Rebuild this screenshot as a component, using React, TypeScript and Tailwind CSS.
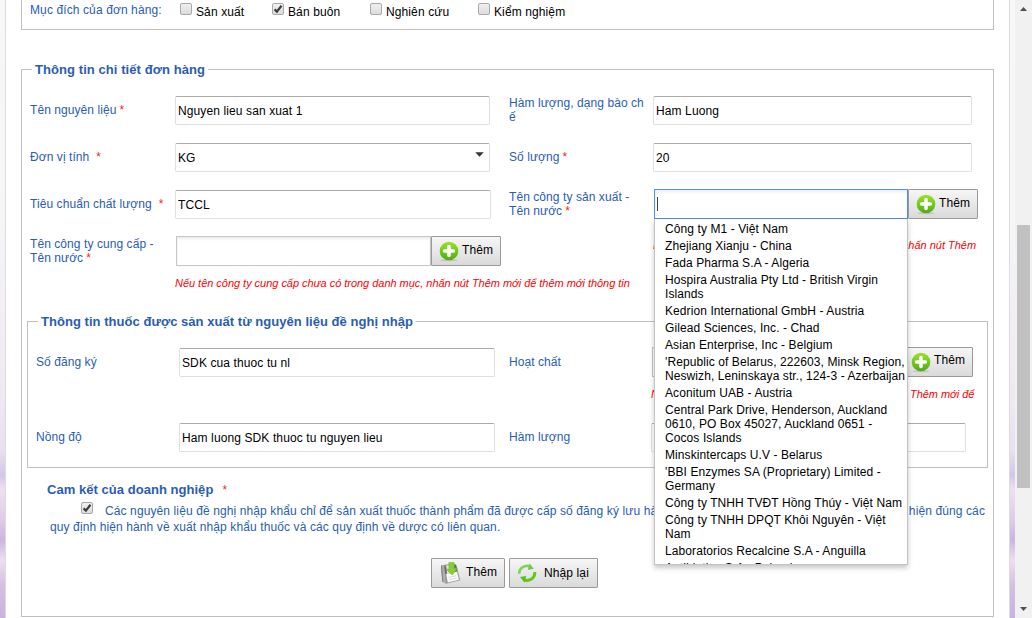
import type { ReactNode } from 'react';

const companies: string[][] = [
  ['Công ty M1 - Việt Nam'],
  ['Zhejiang Xianju - China'],
  ['Fada Pharma S.A - Algeria'],
  ['Hospira Australia Pty Ltd - British Virgin', 'Islands'],
  ['Kedrion International GmbH - Austria'],
  ['Gilead Sciences, Inc. - Chad'],
  ['Asian Enterprise, Inc - Belgium'],
  ["'Republic of Belarus, 222603, Minsk Region,", 'Neswizh, Leninskaya str., 124-3 - Azerbaijan'],
  ['Aconitum UAB - Austria'],
  ['Central Park Drive, Henderson, Auckland', '0610, PO Box 45027, Auckland 0651 -', 'Cocos Islands'],
  ['Minskintercaps U.V - Belarus'],
  ["'BBI Enzymes SA (Proprietary) Limited -", 'Germany'],
  ['Công ty TNHH TVĐT Hồng Thúy - Việt Nam'],
  ['Công ty TNHH DPQT Khôi Nguyên - Việt', 'Nam'],
  ['Laboratorios Recalcine S.A - Anguilla'],
  ['Antibiotice S.A - Poland'],
];

function Star({ className = 'ml-[3px]' }: { className?: string }) {
  return <span className={`text-[#ff2020] ${className}`}>*</span>;
}

function Label({ children, className = 'w-[145px]' }: { children: ReactNode; className?: string }) {
  return <div className={`-mt-[2px] shrink-0 whitespace-nowrap leading-[14px] tracking-[0.07px] text-[#2a5db0] ${className}`}>{children}</div>;
}

function Field({ children, className }: { children?: ReactNode; className: string }) {
  return (
    <div
      className={`flex h-[29px] shrink-0 items-center whitespace-nowrap rounded-[2px] border border-[#dfdfdf] border-t-[#ababab] bg-white pl-[2px] text-black ${className}`}
    >
      {children}
    </div>
  );
}

function Check({ checked = false, className = '' }: { checked?: boolean; className?: string }) {
  return (
    <span
      className={`inline-flex h-[12px] w-[12px] shrink-0 items-center justify-center rounded-[2px] border border-[#a9a9a9] bg-linear-to-b from-[#efefef] to-[#dcdcdc] ${className}`}
    >
      {checked && (
        <svg width="10" height="10" viewBox="0 0 10 10" fill="none">
          <path d="M1.6 5.4 L3.9 7.6 L8.5 1.8" stroke="#3b3b3b" strokeWidth="2.2" />
        </svg>
      )}
    </span>
  );
}

function PlusIcon() {
  return (
    <svg width="20" height="22" viewBox="0 0 20 22" className="mt-[2px]">
      <defs>
        <linearGradient id="plus" x1="0" y1="0" x2="0" y2="1">
          <stop offset="0" stopColor="#9fe02a" />
          <stop offset="0.5" stopColor="#71cc1c" />
          <stop offset="1" stopColor="#57a51b" />
        </linearGradient>
      </defs>
      <ellipse cx="10" cy="19.2" rx="8.5" ry="1" fill="#c4c4c4" />
      <circle cx="10" cy="10" r="9.3" fill="url(#plus)" />
      <path d="M10 5.6 V14.4 M5.6 10 H14.4" stroke="#fff" strokeWidth="3.6" strokeLinecap="round" />
    </svg>
  );
}

function SaveIcon() {
  return (
    <svg width="22" height="23" viewBox="0 0 22 23">
      <path d="M1 3.2 L14.5 1.4 L16.4 3 L20.2 18.3 L6 21.8 L2.4 19.8 Z" fill="#969696" />
      <path d="M1 3.2 L2.4 19.8 L6 21.8 L4 3.6 Z" fill="#b0b0b0" />
      <path d="M1.5 4 L2.8 19.6" stroke="#707070" strokeWidth="0.8" />
      <path d="M4.2 4 L6.2 5 L7.2 11.5 L5.4 12 Z" fill="#666" />
      <path d="M6.2 3.6 L10 3.2 L11 11 L7 11.8 Z" fill="#e4e4e4" />
      <path d="M14.4 3 L16 3.2 L17.2 9 L15 9.4 Z" fill="#606060" />
      <path d="M6.2 12 L17 9.8 L19 17.8 L7.8 20.6 Z" fill="#fafafa" />
      <path d="M8.6 15.4 L16.2 13.7 M9 17.8 L17 16" stroke="#cfcfcf" strokeWidth="0.8" />
      <path d="M8.8 0.6 L14 0.6 L14.2 6.2 L17.4 6.2 L12.2 13 L6.2 7.4 L9 6.9 Z" fill="#84d030" stroke="#68b526" strokeWidth="0.5" />
    </svg>
  );
}

function ReloadIcon() {
  return (
    <svg width="20" height="20" viewBox="0 0 20 20" fill="none">
      <path d="M2.2 10.8 A7.8 7.8 0 0 1 13.3 3.6" stroke="#80d45c" strokeWidth="2.8" />
      <path d="M12.6 0.6 L16.8 5.8 L10.8 7 Z" fill="#72c94c" />
      <path d="M17.8 9 A7.8 7.8 0 0 1 6.7 16.6" stroke="#5fca1a" strokeWidth="3" />
      <path d="M7.6 19.6 L3 14 L9.2 13 Z" fill="#57bf17" />
    </svg>
  );
}

function Button({ icon, children, className }: { icon: ReactNode; children: ReactNode; className: string }) {
  return (
    <button
      className={`flex h-[30px] shrink-0 items-center whitespace-nowrap rounded-[1px] border border-[#9a9a9a] bg-linear-to-b from-[#f6f6f6] to-[#dadada] text-black ${className}`}
    >
      {icon}
      {children}
    </button>
  );
}

function AddButton() {
  return (
    <Button icon={<PlusIcon />} className="w-[70px] pl-[7px]">
      <span className="-mt-[3px] ml-[3px]">Thêm</span>
    </Button>
  );
}

function Hint({ children, className }: { children: ReactNode; className: string }) {
  return (
    <div className={`shrink-0 overflow-hidden whitespace-nowrap text-[11px] italic leading-4 text-[#ff0000] ${className}`}>
      {children}
    </div>
  );
}

function CompanyList() {
  return (
    <ul className="absolute -left-px top-[29px] z-10 flex h-[346px] w-[254px] flex-col gap-[3px] overflow-hidden border border-t-0 border-[#c3c3c3] bg-white pl-[10px] pt-[3px] tracking-[0.09px] text-black shadow-[0_3px_5px_rgba(0,0,0,0.22)]">
      {companies.map((lines) => (
        <li key={lines[0]} className="shrink-0 whitespace-nowrap leading-[14px]">
          {lines.map((line) => (
            <div key={line}>{line}</div>
          ))}
        </li>
      ))}
    </ul>
  );
}

function Strip() {
  return (
    <div className="w-[5px] shrink-0 bg-[linear-gradient(to_bottom,#f8f8f8_0px,#f6f5f7_220px,#efe8f3_400px,#eadff0_450px,#d3c6eb_475px,#eee0f3_490px,#dfcbe9_520px,#cbb5df_540px,#eddff2_560px,#d6bfe3_585px,#c9b2dc_618px)]" />
  );
}

export default function App() {
  return (
    <div className="flex h-[618px] w-[1032px] overflow-hidden bg-white font-['Liberation_Sans',Arial,sans-serif] text-[12px] tracking-[0.11px]">
      <Strip />
      <main className="flex w-[1005px] shrink-0 flex-col border-x border-[#dcdcdc] pl-[15px]">
        <section className="flex h-[30px] w-[973px] shrink-0 border border-t-0 border-[#c0c0c0] pl-[8px] text-black">
          <div className="w-[150px] pt-[3px] leading-[14px] text-[#2a5db0]">Mục đích của đơn hàng:</div>
          <div className="flex w-[92px] pt-[5px] leading-[14px]">
            <Check className="-mt-[2px] mr-[4px]" />Sản xuất
          </div>
          <div className="flex w-[98px] pt-[5px] leading-[14px]">
            <Check checked className="-mt-[2px] mr-[4px]" />Bán buôn
          </div>
          <div className="flex w-[108px] pt-[5px] leading-[14px]">
            <Check className="-mt-[2px] mr-[4px]" />Nghiên cứu
          </div>
          <div className="flex pt-[5px] leading-[14px]">
            <Check className="-mt-[2px] mr-[4px]" />Kiểm nghiệm
          </div>
        </section>

        <fieldset className="mt-[29px] h-[558px] w-[973px] shrink-0 border border-[#c0c0c0]">
          <legend className="ml-[10px] h-5 whitespace-nowrap px-[3px] pt-px text-[13px] font-bold leading-5 tracking-[0.07px] text-[#2a5db0]">
            Thông tin chi tiết đơn hàng
          </legend>
          <div className="flex flex-col pt-[8px]">
            <div className="flex h-[47px] items-center pl-[8px]">
              <Label>Tên nguyên liệu<Star /></Label>
              <Field className="w-[315px]">Nguyen lieu san xuat 1</Field>
              <Label className="ml-[19px] w-[144px]">Hàm lượng, dạng bào ch<br />ế</Label>
              <Field className="w-[319px]">Ham Luong</Field>
            </div>
            <div className="flex h-[47px] items-center pl-[8px]">
              <Label>Đơn vị tính<Star className="ml-[7px]" /></Label>
              <Field className="w-[315px] justify-between pr-[5px]">
                <span>KG</span>
                <svg width="9" height="5" viewBox="0 0 9 5" className="-mt-[7px]">
                  <path d="M0.3 0.3 H8.7 L4.5 4.7 Z" fill="#333" />
                </svg>
              </Field>
              <Label className="ml-[19px] w-[144px]">Số lượng<Star /></Label>
              <Field className="w-[319px]">20</Field>
            </div>
            <div className="flex h-[47px] items-center pl-[8px]">
              <Label>Tiêu chuẩn chất lượng<Star className="ml-[7px]" /></Label>
              <Field className="w-[316px]">TCCL</Field>
              <Label className="ml-[18px] w-[145px]">Tên công ty sản xuất -<br />Tên nước<Star /></Label>
              <div className="relative -mt-px flex h-[30px] w-[254px] items-center border border-[#4f8fee] bg-white pl-[2px] shadow-[inset_0_2px_3px_rgba(0,0,0,0.08)]">
                <span className="h-[14px] w-px bg-[#444]" />
                <CompanyList />
              </div>
              <div className="-mt-px"><AddButton /></div>
            </div>
            <div className="flex h-[47px] items-center pl-[8px]">
              <Label className="w-[146px]">Tên công ty cung cấp -<br />Tên nước<Star /></Label>
              <div className="-mt-px h-[30px] w-[255px] border border-[#c6c6c6] bg-white shadow-[inset_0_2px_3px_rgba(0,0,0,0.08)]" />
              <div className="-mt-px"><AddButton /></div>
              <Hint className="-mt-[13px] ml-[152px] w-[325px] tracking-[-0.01px]">
                Nếu tên công ty sản xuất chưa có trong danh mục, nhấn nút Thêm
              </Hint>
            </div>
            <Hint className="ml-[153px] w-[480px] tracking-[-0.03px]">
              Nếu tên công ty cung cấp chưa có trong danh mục, nhấn nút Thêm mới để thêm mới thông tin
            </Hint>

            <fieldset className="ml-[5px] mt-[20px] h-[157px] w-[961px] border border-[#c0c0c0]">
              <legend className="ml-[10px] h-5 whitespace-nowrap px-[3px] pt-px text-[13px] font-bold leading-5 tracking-[0.04px] text-[#2a5db0]">
                Thông tin thuốc được sản xuất từ nguyên liệu đề nghị nhập
              </legend>
              <div className="pt-[8px]">
                <div className="flex h-[47px] items-center pl-[8px]">
                  <Label className="w-[143px]">Số đăng ký</Label>
                  <Field className="w-[316px]">SDK cua thuoc tu nl</Field>
                  <Label className="ml-[14px] w-[143px]">Hoạt chất</Label>
                  <div className="-mt-[2px] h-[30px] w-[251px] border border-[#c6c6c6] bg-white" />
                  <div className="-mt-[2px]"><AddButton /></div>
                </div>
                <Hint className="ml-[623px] w-[330px] tracking-[-0.035px]">
                  Nếu tên hoạt chất chưa có trong danh mục, nhấn nút Thêm mới để
                </Hint>
                <div className="mt-[12px] flex h-[47px] items-center pl-[8px]">
                  <Label className="w-[143px]">Nồng độ</Label>
                  <Field className="w-[316px]">Ham luong SDK thuoc tu nguyen lieu</Field>
                  <Label className="ml-[14px] w-[142px]">Hàm lượng</Label>
                  <Field className="w-[315px]" />
                </div>
              </div>
            </fieldset>

            <div className="ml-[25px] mt-[14px] whitespace-nowrap text-[13px] leading-4 tracking-[0.04px] text-[#2a5db0]">
              <b>Cam kết của doanh nghiệp</b>
              <Star className="ml-[9px] text-[12px]" />
            </div>
            <div className="ml-[28px] mt-[5px] whitespace-nowrap leading-4 text-[#2a5db0]">
              <div className="flex h-4 w-[935px] pl-[31px]">
                <Check checked className="-mt-px mr-[12px]" />
                <div className="flex grow justify-between">
                  <span>
                    Các nguyên liệu đề nghị nhập khẩu chỉ để sản xuất thuốc thành phẩm đã được cấp số đăng ký lưu hành tại Việt Nam.
                  </span>
                  <span>Chúng tôi cam kết thực hiện đúng các</span>
                </div>
              </div>
              <div>quy định hiện hành về xuất nhập khẩu thuốc và các quy định về dược có liên quan.</div>
            </div>
            <div className="ml-[409px] mt-[23px] flex gap-[4px]">
              <Button icon={<SaveIcon />} className="w-[74px] pl-[8px]">
                <span className="-mt-[3px] ml-[4px]">Thêm</span>
              </Button>
              <Button icon={<ReloadIcon />} className="w-[89px] pl-[7px]">
                <span className="ml-[7px]">Nhập lại</span>
              </Button>
            </div>
          </div>
        </fieldset>
      </main>
      <Strip />
      <div className="flex w-[17px] shrink-0 flex-col items-center bg-[#f1f1f1]">
        <svg width="7" height="4" viewBox="0 0 7 4" className="mt-[7px]">
          <path d="M3.5 0 L7 4 H0 Z" fill="#505050" />
        </svg>
        <div className="mt-[214px] h-[263px] w-[13px] bg-[#c1c1c1]" />
        <svg width="7" height="4" viewBox="0 0 7 4" className="mt-[119px]">
          <path d="M0 0 H7 L3.5 4 Z" fill="#505050" />
        </svg>
      </div>
    </div>
  );
}
